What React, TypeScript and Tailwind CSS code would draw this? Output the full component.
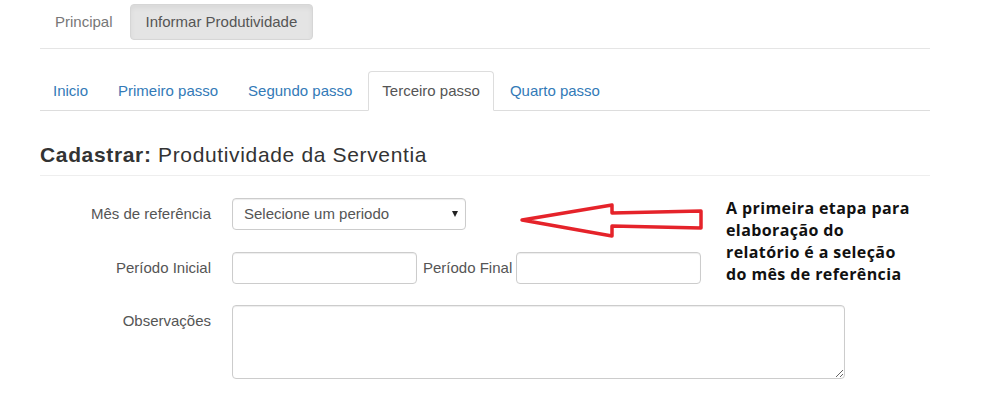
const steps = ['Inicio', 'Primeiro passo', 'Segundo passo', 'Terceiro passo', 'Quarto passo'];
const activeStep = 'Terceiro passo';

const inputClass =
  'h-[32px] rounded border border-[#ccc] bg-white px-3 text-[15px] text-[#555] shadow-[inset_0_1px_1px_rgba(0,0,0,0.075)] outline-none';

function Arrow() {
  return (
    <svg width="190" height="42" viewBox="0 0 190 42" className="block">
      <path
        d="M5 20 L95 5 L95 13 L184 11 L184 28 L95 26 L95 36 Z"
        fill="none"
        stroke="#e5232a"
        strokeWidth="3.5"
        strokeLinejoin="round"
      />
    </svg>
  );
}

export default function App() {
  return (
    <div className="relative h-[419px] w-full overflow-hidden bg-white font-['Liberation_Sans',Arial,sans-serif] text-[15px] text-[#555]">
      <div className="ml-10 w-[890px]">
        {/* top pills */}
        <nav className="flex items-center gap-[2px] border-b border-[#e5e5e5] pt-1 pb-2">
          <a className="px-[15px] py-2 leading-5 text-[#777]">Principal</a>
          <span className="rounded border border-[#d6d6d6] bg-[#e4e4e4] px-[15px] py-[7px] leading-5 text-[#555] shadow-[inset_0_3px_5px_rgba(0,0,0,0.05)]">
            Informar Produtividade
          </span>
        </nav>

        {/* step tabs */}
        <ul className="mt-[22px] flex border-b border-[#ddd]">
          {steps.map((s, i) => {
            const active = s === activeStep;
            return (
              <li key={s} className={`-mb-px mr-[2px] ${i === 0 ? '-ml-[1px]' : ''}`}>
                <a
                  className={`block rounded-t border px-[13px] py-[9px] leading-5 ${
                    active
                      ? 'border-[#ddd] border-b-white bg-white text-[#555]'
                      : 'border-transparent text-[#337ab7]'
                  }`}
                >
                  {s}
                </a>
              </li>
            );
          })}
        </ul>

        <h3 className="mt-[33px] border-b border-[#eee] pb-[9px] text-[21px] leading-[22px] tracking-[0.65px] text-[#333]">
          <b>Cadastrar:</b> Produtividade da Serventia
        </h3>

        {/* form */}
        <form className="mt-[22px]">
          <div className="flex items-center">
            <label className="w-[171px] text-right">Mês de referência</label>
            <div className="relative ml-[21px] w-[234px]">
              <select className={`${inputClass} w-full appearance-none pl-[11px]`} defaultValue="">
                <option value="">Selecione um periodo</option>
              </select>
              <span className="pointer-events-none absolute right-[8px] top-[13px] h-0 w-0 border-x-[3.5px] border-t-[6px] border-x-transparent border-t-[#222]" />
            </div>
          </div>

          <div className="mt-[22px] flex items-center">
            <label className="w-[171px] text-right">Período Inicial</label>
            <input className={`${inputClass} ml-[21px] w-[185px]`} />
            <label className="ml-[6px]">Período Final</label>
            <input className={`${inputClass} ml-[4px] w-[185px]`} />
          </div>

          <div className="mt-[21px] flex items-start">
            <label className="w-[171px] pt-[6px] text-right leading-5">Observações</label>
            <textarea className={`${inputClass} ml-[21px] h-[74px] w-[613px] py-[6px]`} />
          </div>
        </form>
      </div>

      {/* annotation */}
      <div className="absolute left-[517px] top-[200px]">
        <Arrow />
      </div>
      <p className="absolute left-[726px] top-[197px] font-['Open_Sans',sans-serif] text-[16px] font-bold leading-[22px] tracking-[0.4px] text-[#111]">
        A primeira etapa para
        <br />
        elaboração do
        <br />
        relatório é a seleção
        <br />
        do mês de referência
      </p>
    </div>
  );
}
